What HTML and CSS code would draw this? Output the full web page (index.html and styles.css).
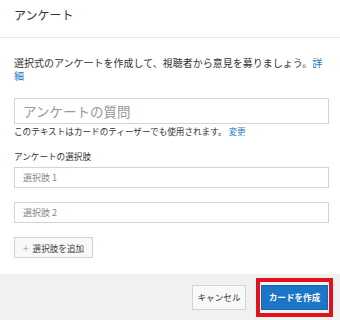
FILE: index.html
```html
<!DOCTYPE html>
<html lang="ja">
<head>
<meta charset="utf-8">
<link rel="stylesheet" href="styles.css">
</head>
<body>
<div class="dialog">
  <div class="header">アンケート</div>
  <div class="content">
    <p class="desc">選択式のアンケートを作成して、視聴者から意見を募りましょう。<a class="link">詳細</a></p>
    <div class="question">アンケートの質問</div>
    <p class="help">このテキストはカードのティーザーでも使用されます。 <a class="link">変更</a></p>
    <p class="label">アンケートの選択肢</p>
    <div class="choice">選択肢 1</div>
    <div class="choice">選択肢 2</div>
    <div class="add"><span class="plus">+</span>選択肢を追加</div>
  </div>
  <div class="footer">
    <div class="btn cancel">キャンセル</div>
    <div class="highlight"><div class="btn create">カードを作成</div></div>
  </div>
</div>
</body>
</html>
```

FILE: styles.css
```css
html, body {
  margin: 0;
  padding: 0;
  background: #fff;
}
body {
  font-family: "Noto Sans CJK JP", "Noto Sans", sans-serif;
  color: #333;
  width: 340px;
  height: 320px;
  overflow: hidden;
}
.dialog {
  display: flex;
  flex-direction: column;
  height: 320px;
}
.header {
  border-bottom: 1px solid #e8e8e8;
  font-size: 12px;
  line-height: 14px;
  padding: 8px 14px 0;
  box-sizing: border-box;
  height: 38px;
  color: #333;
}
.content {
  flex: 1;
  padding: 18px 11px 0 14px;
}
.desc {
  margin: 0;
  font-size: 10px;
  line-height: 13px;
  color: #333;
}
.link {
  color: #167ac6;
  text-decoration: none;
}
.question {
  margin-top: 16px;
  height: 26px;
  box-sizing: border-box;
  border: 1px solid #d3d3d3;
  font-size: 13.5px;
  line-height: 24px;
  padding-left: 8px;
  color: #999;
}
.help {
  margin: 1px 0 0;
  font-size: 8.6px;
  line-height: 12px;
  color: #333;
}
.label {
  margin: 13px 0 0;
  font-size: 8.6px;
  line-height: 12px;
  color: #333;
}
.choice {
  margin-top: 5px;
  height: 21px;
  box-sizing: border-box;
  border: 1px solid #d3d3d3;
  font-size: 9px;
  line-height: 19px;
  padding-left: 8px;
  color: #888;
}
.choice + .choice {
  margin-top: 14px;
}
.add {
  margin-top: 14px;
  width: 79px;
  height: 21px;
  box-sizing: border-box;
  border: 1px solid #d3d3d3;
  background: #f8f8f8;
  font-size: 8.6px;
  line-height: 19px;
  padding-left: 8px;
  color: #444;
}
.plus {
  color: #aaa;
  margin-right: 4px;
  font-size: 10px;
}
.footer {
  height: 46px;
  background: #f1f1f1;
  display: flex;
  justify-content: flex-end;
  align-items: center;
  padding-right: 7px;
  gap: 10px;
}
.btn {
  height: 25px;
  box-sizing: border-box;
  font-size: 8.6px;
  line-height: 23px;
  text-align: center;
}
.cancel {
  width: 54px;
  border: 1px solid #d3d3d3;
  background: #f8f8f8;
  color: #333;
}
.highlight {
  border: 4px solid #e0121c;
  padding: 3px 1px;
}
.create {
  width: 67px;
  border: 1px solid #1467b0;
  background: #1b76c8;
  color: #fff;
  font-weight: bold;
}
```
